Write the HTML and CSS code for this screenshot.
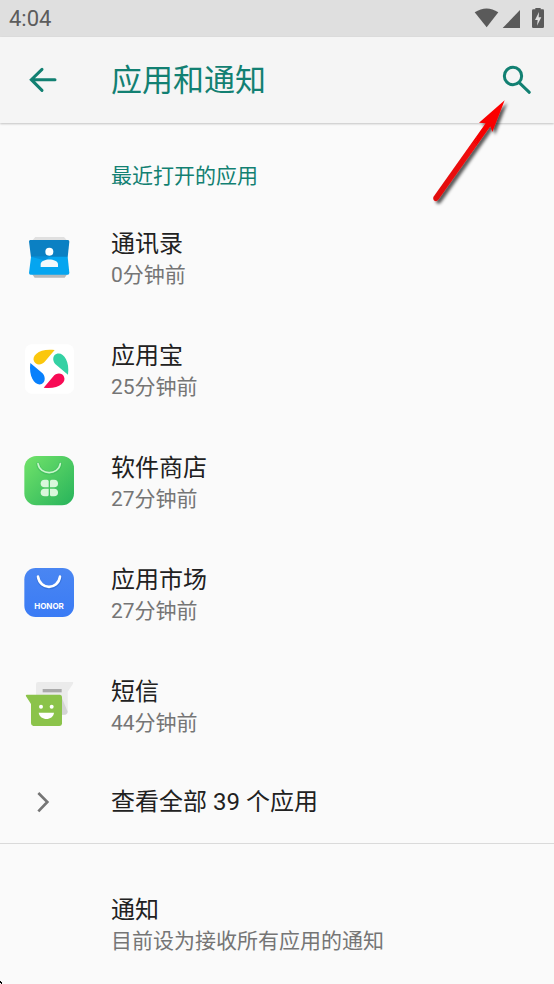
FILE: index.html
```html
<!DOCTYPE html>
<html lang="zh-CN">
<head>
<meta charset="utf-8">
<meta name="viewport" content="width=device-width, initial-scale=1">
<title>应用和通知</title>
<link rel="stylesheet" href="styles.css">
</head>
<body>
<div class="status">
  <span>4:04</span>
  <svg class="status-icons" viewBox="162 0 213 111" aria-hidden="true">
    <path d="M164 37Q200 14 235 37L200 82Z"/>
    <path d="M300 30V84H248Z"/>
    <path fill-rule="evenodd" d="M346 28V24H362V28H369Q372 28 372 32V80Q372 84 368 84H340Q336 84 336 80V32Q336 28 340 28ZM357 36L345 60H353L351 77L364 52H356Z"/>
  </svg>
</div>
<header class="bar">
  <button class="icon-button" type="button" aria-label="返回">
    <svg class="back" viewBox="90 195 90 90" aria-hidden="true"><path d="M168 239H98M129 208L97 239L129 271"/></svg>
  </button>
  <h1>应用和通知</h1>
  <button class="icon-button" type="button" aria-label="搜索">
    <svg class="search" viewBox="243 192 96 96" aria-hidden="true"><circle cx="279" cy="228" r="26"/><path d="M300 250L328 277"/></svg>
  </button>
</header>
<main>
  <section class="recent">
    <h2>最近打开的应用</h2>
    <a class="row" href="#contacts">
      <svg class="app-icon" viewBox="42 21 150 150" aria-hidden="true">
        <path fill="#e0e0e0" d="M76 36H162L170 45H68Z"/>
        <path fill="#b5b9bb" d="M66 147H172L164 158H74Z"/>
        <path fill="#0b80c3" d="M61 45H174Q178 45 178 50L173 97H63L57 50Q57 45 61 45Z"/>
        <path fill="#05a5f0" d="M63 95H173L178 143Q178 149 173 149H62Q57 149 57 143Z"/>
        <path fill="#0790da" d="M63 95L108 107L117 95Z"/>
        <circle cx="118" cy="80" r="12" fill="#fff"/>
        <path fill="#f3f8fb" d="M92 126V117C94 99 142 99 144 117V126Z"/>
      </svg>
      <span class="copy"><span class="name">通讯录</span><span class="note">0分钟前</span></span>
    </a>
    <a class="row" href="#yingyongbao">
      <svg class="app-icon" viewBox="42 27 150 150" aria-hidden="true">
        <rect x="45" y="28" width="147" height="148" rx="20" fill="#fff"/>
        <path fill="#fbc70d" d="M72 79C64 62 88 39 134 45L106 78C97 91 77 92 72 79Z"/>
        <path fill="#34d1a4" d="M139 57C157 49 180 74 174 119L140 91C127 82 126 62 139 57Z"/>
        <path fill="#f80b55" d="M162 125C170 142 145 164 101 158L129 125C138 112 157 112 162 125Z"/>
        <path fill="#0880fc" d="M95 147C78 154 55 130 61 84L94 112C107 121 108 142 95 147Z"/>
      </svg>
      <span class="copy"><span class="name">应用宝</span><span class="note">25分钟前</span></span>
    </a>
    <a class="row" href="#software-store">
      <svg class="app-icon" viewBox="42 33 150 150" aria-hidden="true">
        <defs>
          <linearGradient id="green" x1="0" y1="0" x2="1" y2="1"><stop stop-color="#72e36a"/><stop offset="1" stop-color="#27b35b"/></linearGradient>
        </defs>
        <rect x="43" y="33" width="149" height="148" rx="36" fill="url(#green)"/>
        <path d="M84 57C90 93 145 93 151 57" fill="none" stroke="#36b65b" stroke-width="11" stroke-linecap="round" opacity=".5"/>
        <path d="M84 56C90 92 145 92 151 56" fill="none" stroke="#c9f5cb" stroke-width="5" stroke-linecap="round"/>
        <g fill="#d9f7dc">
          <path d="M104 104H111Q116 104 116 109V127H104Q92 127 92 115.500Q92 104 104 104Z"/>
          <path d="M132 104H125Q120 104 120 109V127H132Q144 127 144 115.500Q144 104 132 104Z"/>
          <path d="M104 154H111Q116 154 116 149V131H104Q92 131 92 142.500Q92 154 104 154Z"/>
          <path d="M132 154H125Q120 154 120 149V131H132Q144 131 144 142.500Q144 154 132 154Z"/>
        </g>
      </svg>
      <span class="copy"><span class="name">软件商店</span><span class="note">27分钟前</span></span>
    </a>
    <a class="row" href="#app-market">
      <svg class="app-icon" viewBox="42 39 150 150" aria-hidden="true">
        <defs>
          <linearGradient id="blue" x1="0" y1="0" x2="0" y2="1"><stop stop-color="#4a86f2"/><stop offset="1" stop-color="#3a7bf5"/></linearGradient>
        </defs>
        <rect x="43" y="39" width="149" height="147" rx="34" fill="url(#blue)"/>
        <path d="M84 66C89 108 146 108 151 66" fill="none" stroke="#2861c4" stroke-width="11" stroke-linecap="round" opacity=".5"/>
        <path d="M84 65C90 106 144 106 150 65" fill="none" stroke="#fff" stroke-width="8" stroke-linecap="round"/>
        <text class="honor" x="117" y="162" text-anchor="middle">HONOR</text>
      </svg>
      <span class="copy"><span class="name">应用市场</span><span class="note">27分钟前</span></span>
    </a>
    <a class="row" href="#messages">
      <svg class="app-icon" viewBox="42 30 150 150" aria-hidden="true">
        <path fill="#ebebeb" d="M84 36H188Q191 37 189 41L173 65V126Q172 134 164 134H78V42Q78 36 84 36Z"/>
        <path fill="#d4d4d4" d="M152 75L173 125Q171 134 164 134H154Z"/>
        <rect x="98" y="57" width="57" height="10" fill="#aaa"/>
        <path fill="#8bc34a" d="M50 74H150Q156 75 156 81V161Q155 168 148 168H70Q63 167 63 160V102L48 79Q46 75 50 74Z"/>
        <circle cx="93" cy="110" r="6" fill="#fff"/><circle cx="125" cy="110" r="6" fill="#fff"/>
        <path fill="#fff" d="M86 128H132C129 153 90 153 86 128Z"/>
      </svg>
      <span class="copy"><span class="name">短信</span><span class="note">44分钟前</span></span>
    </a>
    <a class="row all" href="#all">
      <svg class="chevron" viewBox="73 18 60 90" aria-hidden="true"><path d="M86 36L113 63L86 91"/></svg>
      <span class="name">查看全部 39 个应用</span>
    </a>
  </section>
  <a class="row notice" href="#notifications">
    <span class="copy"><span class="name">通知</span><span class="note">目前设为接收所有应用的通知</span></span>
  </a>
</main>
<svg class="pointer" viewBox="30 291 240 330" aria-hidden="true">
  <defs>
    <linearGradient id="red" x1="0" y1="1" x2="1" y2="0"><stop stop-color="#e01010"/><stop offset="1" stop-color="#ff0000"/></linearGradient>
    <filter id="shadow" x="-20%" y="-20%" width="150%" height="150%"><feDropShadow dx="8" dy="8" stdDeviation="5" flood-color="#000" flood-opacity=".65"/></filter>
  </defs>
  <path filter="url(#shadow)" fill="url(#red)" d="M254 301L177 368L197 370L40 591Q38 600 45 603Q52 605 56 598L211 379L217 396Z"/>
</svg>
<svg class="corner" viewBox="0 0 2 3" aria-hidden="true"><path d="M0 0H1V1H2V3H1V2H0Z"/></svg>
</body>
</html>
```
FILE: styles.css
```css
* { box-sizing: border-box; }

body {
  position: relative;
  min-height: 100vh;
  margin: 0;
  background: #fafafa;
  color: #212121;
  font-family: Roboto, "Noto Sans CJK SC", sans-serif;
}

.status {
  display: flex;
  align-items: center;
  justify-content: space-between;
  height: 37px;
  padding: 0 9px;
  background: #dfdfdf;
  color: #5c5c5c;
  font-size: 22px;
}

.status-icons { width: 71px; height: 37px; fill: #5a5a5a; }

.bar {
  display: flex;
  align-items: center;
  height: 86px;
  padding: 0 16px 0 23px;
  background: #f5f5f5;
  box-shadow: 0 1px 2px rgba(0, 0, 0, .22);
  color: #128072;
}

h1, h2 { margin: 0; font-weight: 400; }

h1 {
  flex: 1;
  margin-left: 46px;
  padding-top: 2px;
  font-size: 31px;
  line-height: 40px;
}

.icon-button {
  display: flex;
  align-items: center;
  justify-content: center;
  width: 42px;
  height: 48px;
  padding: 0;
  border: 0;
  background: none;
  color: inherit;
}

.icon-button svg { fill: none; stroke: currentColor; }
.back { width: 30px; height: 30px; stroke-width: 9; stroke-linecap: round; }
.search { width: 32px; height: 32px; stroke-width: 9; stroke-linecap: round; }

.recent { padding-top: 38px; border-bottom: 1px solid #dadada; }

h2 {
  margin-bottom: 10px;
  padding-left: 111px;
  color: #128072;
  font-size: 21px;
  line-height: 30px;
}

.row {
  display: flex;
  align-items: center;
  height: 112px;
  padding: 0 24px;
  color: inherit;
  text-decoration: none;
}

.app-icon { flex: none; width: 50px; height: 50px; margin-right: 37px; }
.copy { display: flex; flex-direction: column; padding-top: 4px; }
.name { font-size: 24px; line-height: 32px; }
.note { color: #757575; font-size: 21px; line-height: 30px; }
.honor { fill: #fff; font: 700 24px Inter, sans-serif; }

.all { height: 82px; padding-left: 34px; }

.chevron {
  flex: none;
  width: 20px;
  height: 30px;
  margin-right: 57px;
  fill: none;
  stroke: #757575;
  stroke-width: 8;
}

.notice { margin-top: 23px; padding-left: 111px; }

.pointer {
  position: absolute;
  top: 97px;
  right: 44px;
  width: 80px;
  height: 110px;
  pointer-events: none;
}

.corner {
  position: absolute;
  bottom: 0;
  left: 0;
  width: 2px;
  height: 3px;
}
```
